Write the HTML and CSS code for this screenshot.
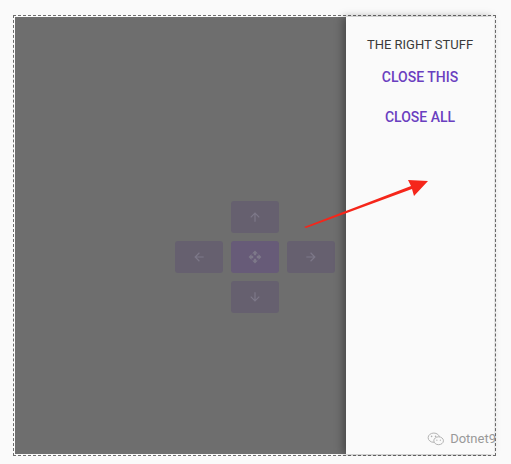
FILE: index.html
```html
<!DOCTYPE html>
<html>
<head>
<meta charset="utf-8">
<link rel="stylesheet" href="styles.css">
</head>
<body>
<div class="frame">
  <div class="stage">
    <div class="backdrop">
      <div class="pad">
        <div class="row">
          <button class="key"><svg viewBox="0 0 24 24"><path d="M4 12l1.41 1.41L11 7.83V20h2V7.83l5.58 5.59L20 12l-8-8-8 8z"/></svg></button>
        </div>
        <div class="row">
          <button class="key"><svg viewBox="0 0 24 24"><path d="M20 11H7.83l5.59-5.59L12 4l-8 8 8 8 1.41-1.41L7.83 13H20v-2z"/></svg></button>
          <button class="key center"><svg viewBox="0 0 24 24"><path d="M10 9h4V6h3l-5-5-5 5h3v3zm-1 1H6V7l-5 5 5 5v-3h3v-4zm14 2l-5-5v3h-3v4h3v3l5-5zm-9 3h-4v3H7l5 5 5-5h-3v-3z"/></svg></button>
          <button class="key"><svg viewBox="0 0 24 24"><path d="M12 4l-1.41 1.41L16.17 11H4v2h12.17l-5.58 5.59L12 20l8-8z"/></svg></button>
        </div>
        <div class="row">
          <button class="key"><svg viewBox="0 0 24 24"><path d="M20 12l-1.41-1.41L13 16.17V4h-2v12.17l-5.58-5.59L4 12l8 8 8-8z"/></svg></button>
        </div>
      </div>
    </div>
    <aside class="drawer">
      <div class="title">THE RIGHT STUFF</div>
      <button class="action">CLOSE THIS</button>
      <button class="action">CLOSE ALL</button>
      <div class="mark">
        <svg class="wx" viewBox="0 0 20 16"><ellipse cx="7.5" cy="6.5" rx="6.5" ry="5.3" fill="none" stroke="#b0b0b0" stroke-width="1.1"/><ellipse cx="13" cy="10" rx="5.5" ry="4.5" fill="#fafafa" stroke="#b0b0b0" stroke-width="1.1"/><circle cx="5" cy="5" r="0.9" fill="#b0b0b0"/><circle cx="9.5" cy="5" r="0.9" fill="#b0b0b0"/><circle cx="11" cy="9.3" r="0.7" fill="#b0b0b0"/><circle cx="15" cy="9.3" r="0.7" fill="#b0b0b0"/></svg>
        <span>Dotnet9</span>
      </div>
    </aside>
    <svg class="arrow" viewBox="0 0 511 464"><path d="M304 227 L411 186 L408 180 L428 181 L414 196 L412 189 L306 228 Z" fill="#f5261a"/></svg>
  </div>
</div>
</body>
</html>
```
FILE: styles.css
```css
html, body {
  margin: 0;
  padding: 0;
  background: #fafafa;
  font-family: Roboto, "Noto Sans", sans-serif;
}
.frame {
  margin: 15px 0 0 13px;
  width: 479px;
  height: 437px;
  border: 1px dashed #6e6e6e;
  padding: 1px;
  background: #fafafa;
}
.stage {
  position: relative;
  height: 100%;
}
.backdrop {
  height: 100%;
  box-sizing: border-box;
  background: #6e6e6e;
  display: flex;
  justify-content: center;
  align-items: flex-start;
  padding-top: 184px;
}
.pad {
  display: flex;
  flex-direction: column;
  align-items: center;
  gap: 8px;
}
.row {
  display: flex;
  gap: 8px;
}
.key {
  width: 48px;
  height: 32px;
  border: 0;
  border-radius: 3px;
  background: #66606f;
  padding: 0;
  display: flex;
  align-items: center;
  justify-content: center;
}
.key.center {
  background: #675b78;
}
.key svg {
  width: 14px;
  height: 14px;
  fill: #7d7889;
}
.drawer {
  position: absolute;
  top: 0;
  right: 0;
  bottom: 0;
  width: 148px;
  background: #fafafa;
  box-shadow: -3px 0 8px rgba(0, 0, 0, 0.35);
  display: flex;
  flex-direction: column;
  align-items: center;
  padding-top: 20px;
  box-sizing: border-box;
}
.title {
  font-size: 13px;
  color: #3a3a3a;
  line-height: 16px;
  margin-bottom: 6px;
}
.action {
  border: 0;
  background: transparent;
  font-family: Roboto, sans-serif;
  font-weight: 500;
  font-size: 14px;
  color: #6a3fc0;
  height: 36px;
  margin-bottom: 4px;
  padding: 0 8px;
}
.mark {
  position: absolute;
  right: -2px;
  bottom: 8px;
  display: flex;
  align-items: center;
  gap: 5px;
  color: #999;
  font-size: 13px;
}
.wx {
  width: 18px;
  height: 14px;
}
.arrow {
  position: absolute;
  left: -15px;
  top: -17px;
  width: 511px;
  height: 464px;
  pointer-events: none;
}
```
